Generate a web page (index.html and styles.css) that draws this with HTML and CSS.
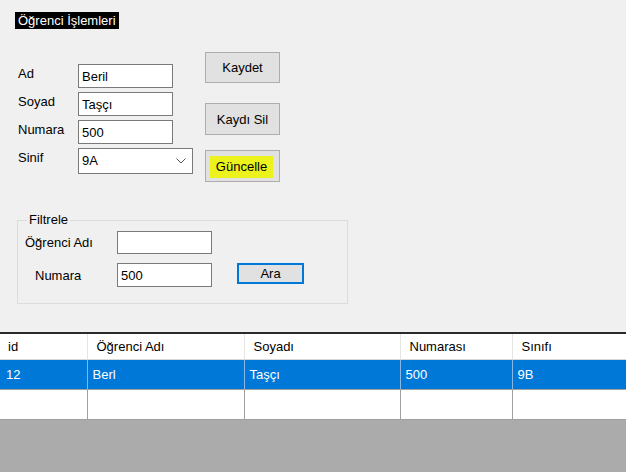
FILE: index.html
```html
<!DOCTYPE html>
<html lang="tr">
<head>
<meta charset="utf-8">
<link rel="stylesheet" href="styles.css">
</head>
<body>
<div class="window">
  <div class="form">
    <div class="title">Öğrenci İşlemleri</div>
    <div class="top">
      <div class="fields">
        <span class="lbl">Ad</span><div class="tb">Beril</div>
        <span class="lbl">Soyad</span><div class="tb">Taşçı</div>
        <span class="lbl">Numara</span><div class="tb">500</div>
        <span class="lbl">Sinif</span>
        <div class="combo"><span>9A</span>
          <svg class="chev" width="10" height="6" viewBox="0 0 10 6"><path d="M0.5 0.5 L5 5 L9.5 0.5" fill="none" stroke="#555" stroke-width="1"/></svg>
        </div>
      </div>
      <div class="buttons">
        <div class="btn">Kaydet</div>
        <div class="btn b2">Kaydı Sil</div>
        <div class="btn b3"><span class="hl">Güncelle</span></div>
      </div>
    </div>
    <div class="group">
      <div class="legend">Filtrele</div>
      <div class="grow r1"><span class="glbl">Öğrenci Adı</span><div class="tb gtb"></div></div>
      <div class="grow r2"><span class="glbl ind">Numara</span><div class="tb gtb">500</div><div class="btn ara">Ara</div></div>
    </div>
  </div>
  <table class="grid">
    <colgroup><col class="c1"><col class="c2"><col class="c3"><col class="c4"><col class="c5"></colgroup>
    <thead>
      <tr><th class="first">id</th><th>Öğrenci Adı</th><th>Soyadı</th><th>Numarası</th><th>Sınıfı</th></tr>
    </thead>
    <tbody>
      <tr class="sel"><td class="first">12</td><td>Berl</td><td>Taşçı</td><td>500</td><td>9B</td></tr>
      <tr class="empty"><td></td><td></td><td></td><td></td><td></td></tr>
    </tbody>
  </table>
  <div class="dark"></div>
</div>
</body>
</html>
```
FILE: styles.css
```css
* { box-sizing: border-box; }
html, body { margin: 0; padding: 0; }
body { font-family: "Liberation Sans", Arial, sans-serif; font-size: 13px; color: #000; background: #f0f0f0; }
.window { width: 626px; height: 472px; display: flex; flex-direction: column; background: #f0f0f0; overflow: hidden; }
.form { padding-top: 12px; height: 332px; flex: none; }
.title { margin-left: 15px; width: fit-content; background: #000; color: #fff; height: 17px; line-height: 17px; padding: 0 3px 0 3px; }
.top { display: flex; margin-top: 23px; }
.fields { margin-left: 18px; padding-top: 12px; display: grid; grid-template-columns: 60px 115px; grid-template-rows: 24px 24px 24px 26px; row-gap: 4px; }
.lbl { line-height: 17px; padding-top: 1px; }
.tb { width: 95px; height: 24px; background: #fff; border: 1px solid #7a7a7a; padding: 0 3px; line-height: 24px; }
.combo { width: 115px; height: 26px; background: #fff; border: 1px solid #7a7a7a; padding: 0 0 0 3px; line-height: 24px; display: flex; justify-content: space-between; align-items: center; }
.chev { margin-right: 6px; }
.buttons { margin-left: 12px; display: flex; flex-direction: column; }
.btn { width: 75px; height: 31px; background: #e1e1e1; border: 1px solid #adadad; display: flex; align-items: center; justify-content: center; }
.b2 { margin-top: 20px; height: 32px; }
.b3 { margin-top: 15px; height: 32px; }
.hl { background: #ecf21c; height: 22px; line-height: 22px; padding: 0 6px; margin-left: -2px; margin-top: 2px; }
.group { margin-left: 17px; margin-top: 38px; width: 331px; height: 84px; border: 1px solid #dcdcdc; }
.legend { margin-top: -9px; margin-left: 9px; width: fit-content; background: #f0f0f0; padding: 0 2px; line-height: 15px; }
.grow { display: flex; align-items: center; }
.r1 { margin-top: 4px; }
.r2 { margin-top: 9px; }
.glbl { margin-left: 7px; width: 92px; }
.glbl.ind { margin-left: 17px; width: 82px; }
.gtb { height: 23px; line-height: 22px; }
.r2 .gtb { height: 24px; line-height: 23px; }
.ara { margin-left: 25px; width: 67px; height: 21px; border: 2px solid #0078d7; align-self: flex-start; }
.grid { border-collapse: collapse; table-layout: fixed; width: 626px; border-top: 2px solid #2a2a2a; background: #fff; flex: none; }
.c1 { width: 87px; } .c2 { width: 157px; } .c3 { width: 156px; } .c4 { width: 112px; } .c5 { width: 114px; }
.grid th { font-weight: normal; text-align: left; height: 26px; padding: 0 0 0 9px; border-right: 1px solid #e5e5e5; border-bottom: 1px solid #d8d8d8; }
.grid th.first { padding-left: 8px; }
.grid td { height: 30px; padding: 0 0 0 5px; border-right: 1px solid #a0a0a0; border-bottom: 1px solid #a0a0a0; }
.grid td.first { padding-left: 6px; }
.sel td { background: #0078d7; color: #fff; border-right-color: #8ab8e6; }
.empty td { background: #fff; }
.dark { flex: 1; background: #ababab; }
```
